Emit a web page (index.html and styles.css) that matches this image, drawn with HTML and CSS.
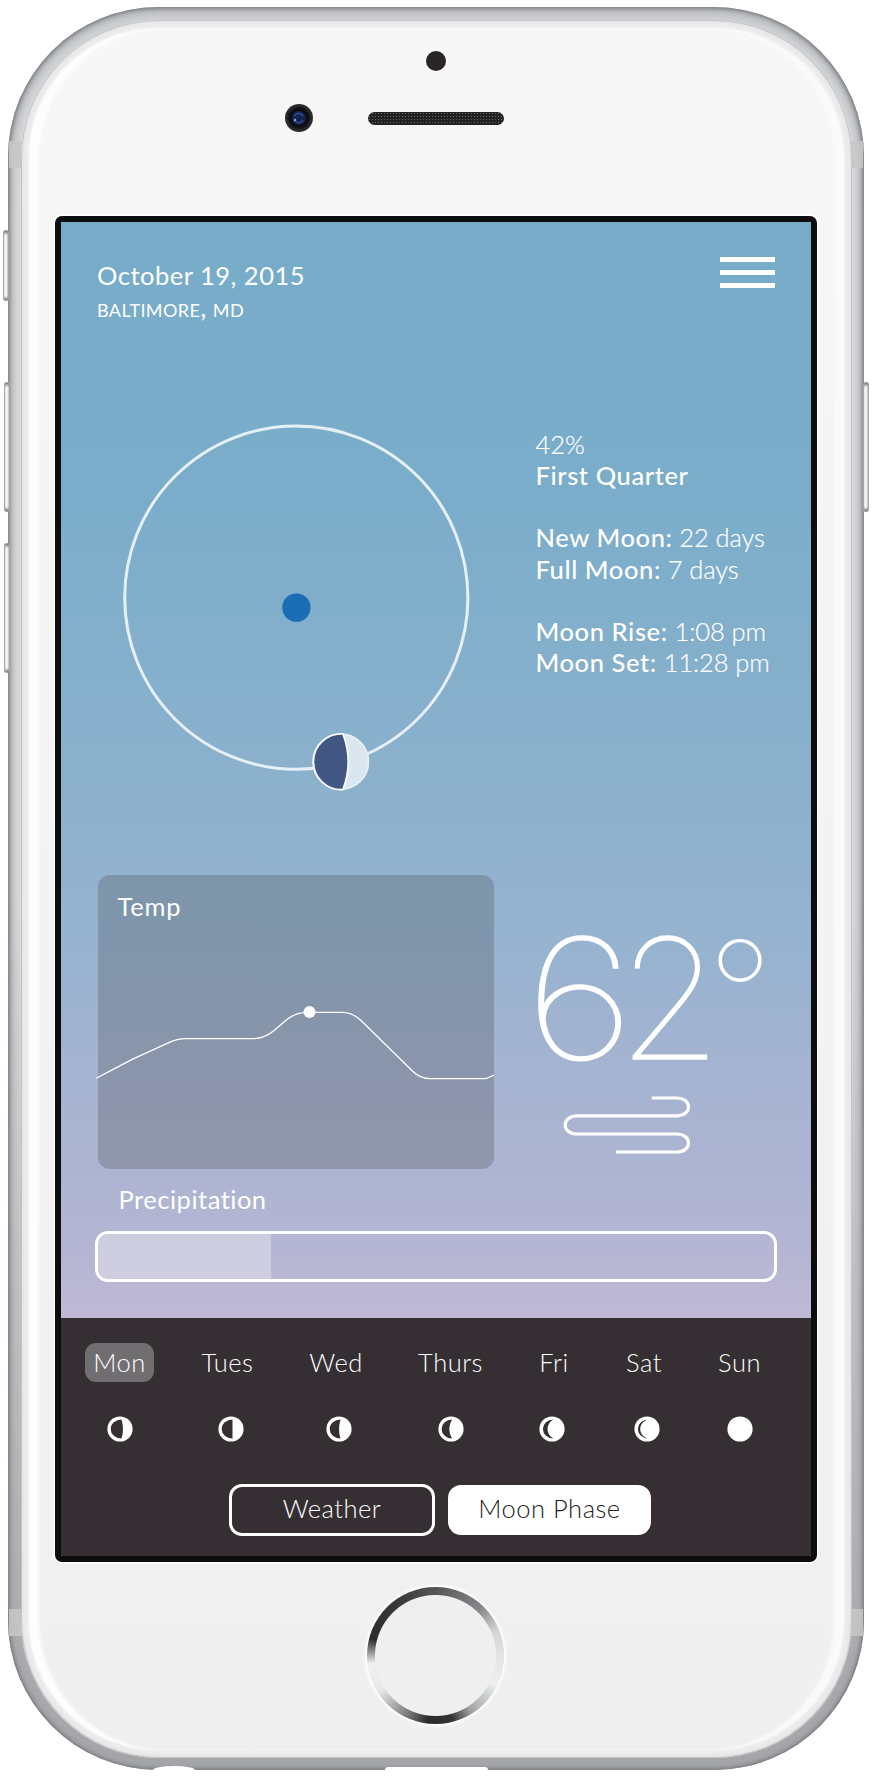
FILE: index.html
```html
<!DOCTYPE html>
<html lang="en">
<head>
<meta charset="utf-8">
<title>Moon Phase</title>
<link rel="stylesheet" href="styles.css">
</head>
<body>
<div class="phone">
  <span class="side mute"></span><span class="side vol-up"></span><span class="side vol-down"></span><span class="side power"></span>
  <span class="band tl"></span><span class="band tr"></span><span class="band bl"></span><span class="band br"></span>
  <span class="notch jack"></span><span class="notch port"></span>
  <div class="rim"><div class="glass">
    <div class="forehead">
      <span class="sensor"></span>
      <div class="ear">
        <span class="camera"><svg viewBox="0 0 28 28" width="28" height="28"><circle cx="14" cy="14" r="7" fill="#14244f"/><path d="M9 12c3-4 7-3 9 0M10 17c3 3 6 2 8-1" fill="none" stroke="#2c4b90" stroke-width="1.6"/><circle cx="10" cy="16" r="1.2" fill="#7da4e6"/></svg></span>
        <span class="speaker"></span>
      </div>
    </div>
    <div class="screen">
      <main class="sky">
        <header class="top">
          <div><div class="date">October 19, 2015</div><div class="city">BALTIMORE<span class="comma">,</span> MD</div></div>
          <div class="burger"><i></i><i></i><i></i></div>
        </header>
        <section class="moon">
          <svg class="orbit" width="360" height="372" viewBox="120 424 360 372">
            <circle cx="296.3" cy="597.6" r="171.6" fill="none" stroke="#e6eff5" stroke-width="3"/>
            <circle cx="296.4" cy="607.6" r="14.2" fill="#1b6db4"/>
            <circle cx="340.8" cy="761.7" r="27.7" fill="#dbe7f0" stroke="#e8f0f6" stroke-width="1.6"/>
            <path d="M343 733.9a27.9 27.9 0 1 0 0 55.7Q353.500 761.700 343 733.900Z" fill="#425684" stroke="#f6fafc" stroke-width="1.8"/>
          </svg>
          <div class="info">
            <p>42%</p><p><b>First Quarter</b></p>
            <p class="gap"><b>New Moon:</b> 22 days</p><p><b>Full Moon:</b> 7 days</p>
            <p class="gap"><b>Moon Rise:</b> 1:08 pm</p><p><b>Moon Set:</b> 11:28 pm</p>
          </div>
        </section>
        <section class="now">
          <div class="temp">
            <h2 class="label">Temp</h2>
            <svg class="line" width="398" height="100" viewBox="-2.500 120 398 100">
              <path d="M-2.300 203.300Q16 193.500 33.700 184.300L70.300 167.700Q79 163.700 87 163.700H153.700C163 163.700 170 160 175.300 155.700L188.700 144.300C195 139.500 201 137.300 208.700 137.300H243.700C251 137.300 257 140.500 262 145L313.700 195.700C319 201 325 203.700 332 203.700H385.300Q388 203.700 395.500 200" fill="none" stroke="#fff" stroke-width="1.300"/>
              <circle cx="211" cy="137" r="6" fill="#fff"/>
            </svg>
          </div>
          <div class="reading">
            <div class="deg"><span class="six">6</span>2<span class="ring">°</span></div>
            <svg class="wind" width="130" height="60" viewBox="562 1095 130 60"><path d="M651.700 1098H676.500C692.500 1098 692.500 1115.800 676.500 1115.800H577.500C561 1115.800 561 1134 577.500 1134H676.500C692.500 1134 692.500 1152 676.500 1152H616" fill="none" stroke="#fff" stroke-width="3.200"/></svg>
          </div>
        </section>
        <h2 class="label precip">Precipitation</h2>
        <div class="bar"><span style="width:25.600%"></span></div>
      </main>
      <footer class="dock">
        <div class="days">
          <div class="day on"><span>Mon</span><svg viewBox="0 0 26 26"><circle cx="13" cy="13" r="12.600"/><path d="M14.500 3.500A10.800 9.500 0 0 0 14.500 22.500Q17.500 13 14.500 3.500Z"/></svg></div>
          <div class="day tue"><span>Tues</span><svg viewBox="0 0 26 26"><circle cx="13" cy="13" r="12.600"/><path d="M14.500 3.500A10.800 9.500 0 0 0 14.500 22.500Z"/></svg></div>
          <div class="day wed"><span>Wed</span><svg viewBox="0 0 26 26"><circle cx="13" cy="13" r="12.600"/><path d="M14.500 3.500A10.800 9.500 0 0 0 14.500 22.500Q11.500 13 14.500 3.500Z"/></svg></div>
          <div class="day"><span>Thurs</span><svg viewBox="0 0 26 26"><circle cx="13" cy="13" r="12.600"/><path d="M14 3.500A10.400 9.500 0 0 0 14 22.500Q8.500 13 14 3.500Z"/></svg></div>
          <div class="day fri"><span>Fri</span><svg viewBox="0 0 26 26"><circle cx="13" cy="13" r="12.600"/><path d="M14.500 3.500A10.600 9.500 0 0 0 14.500 22.500C6.500 18.500 6.500 7.500 14.500 3.500Z"/></svg></div>
          <div class="day sat"><span>Sat</span><svg viewBox="0 0 26 26"><circle cx="13" cy="13" r="12.600"/><path d="M14.500 3.500A10.600 9.500 0 0 0 14.500 22.500C3.500 20 3.500 6 14.500 3.500Z"/></svg></div>
          <div class="day"><span>Sun</span><svg viewBox="0 0 26 26"><circle cx="13" cy="13" r="12.600"/></svg></div>
        </div>
        <div class="tabs"><button class="tab">Weather</button><button class="tab active">Moon Phase</button></div>
      </footer>
    </div>
    <div class="chin"><span class="home"></span></div>
  </div></div>
</div>
</body>
</html>
```
FILE: styles.css
```css
* { box-sizing: border-box; }
body { margin: 0; padding: 7px 8px; background: #fff; color: #fff; font-family: Lato, "Open Sans", sans-serif; font-size: 25.5px; font-weight: 300; font-variant-ligatures: none; letter-spacing: .5px; }
p, h2 { margin: 0; }
.phone { position: relative; width: 856px; height: 1763px; padding: 13px 12.500px; border-radius: 150px; background: linear-gradient(180deg, #d0d2d5, #dcdee0 12%, #dcdee0 50%, #a4a5a8); box-shadow: inset 0 0 4px 1px #6f7174, inset 0 0 11px 4px #a2a4a8; }
.rim { height: 1738px; padding: 7px; border-radius: 138px; background: #efefef; box-shadow: inset 0 0 0 1px #c2c3c5, inset 0 0 6px 3px #e3e3e4; }
.glass { display: flex; flex-direction: column; align-items: center; height: 1724px; border-radius: 131px; background: linear-gradient(180deg, #f7f7f7, #efefef); box-shadow: inset 0 0 2px #ddd, inset 11px 0 3px #fdfdfd, inset -11px 0 3px #fafafa; }
.side { position: absolute; width: 6px; height: 130px; border: 1px solid #a5a6a8; border-radius: 2px; background: linear-gradient(90deg, #ddd, #fff, #bbb); box-shadow: inset 0 5px 3px -3px #777, inset 0 -5px 3px -3px #777; }
.mute { left: -5px; top: 223px; height: 71px; }
.vol-up { left: -4px; top: 375px; }
.vol-down { left: -4px; top: 536px; }
.power { right: -5px; top: 375px; }
.band { position: absolute; width: 12px; height: 27px; background: rgba(200,199,199,.85); }
.tl, .bl { left: 1px; } .tr, .br { right: 1px; } .tl, .tr { top: 134px; } .bl, .br { top: 1602px; }
.notch { position: absolute; bottom: 0; background: #fff; }
.jack { left: 145px; width: 42px; height: 4px; border-radius: 50% 50% 0 0 / 100% 100% 0 0; }
.port { left: 377px; width: 103px; height: 3px; border-radius: 8px 8px 0 0; }
.forehead { height: 189px; padding-top: 23.500px; display: flex; flex-direction: column; align-items: center; }
.sensor { width: 20px; height: 20px; border-radius: 50%; background: #292425; }
.ear { display: flex; align-items: center; gap: 55px; margin: 33.500px 83px 0 0; }
.camera { width: 28px; height: 28px; border-radius: 50%; background: radial-gradient(circle, #0b0b10 45%, #272727 60%, #4b4b4b); }
.camera svg { display: block; }
.speaker { width: 136px; height: 13px; border-radius: 7px; background: radial-gradient(circle, #6a6a6a 22%, transparent 40%) 0 0 / 3px 3px #222; }
.screen { width: 762px; height: 1346px; border: 6.500px solid #0d0d0d; border-radius: 7px; box-shadow: 0 0 0 1px #fff, 0 -2px 1px #fff, 0 2px 1px #fff; display: flex; flex-direction: column; align-items: stretch; overflow: hidden; flex: none; }
.sky { height: 1096px; background: linear-gradient(180deg, #77acc9, #7badca 26%, #83afcb 38%, #8db1cd 53%, #97b3d0 67%, #a3b3d0 76%, #adb4d1 87%, #b5b6d4 94%, #bfb9d4); }
.top { display: flex; justify-content: space-between; height: 202px; padding: 36.500px 36px 0; }
.date { line-height: 32px; font-weight: 400; letter-spacing: .5px; }
.city { font-size: 25px; line-height: 32px; font-weight: 400; font-variant-caps: all-small-caps; letter-spacing: .4px; }
.comma { margin-right: 1px; font-size: 27px; line-height: 1; font-variant-caps: normal; }
.burger { display: flex; flex-direction: column; gap: 7.500px; margin-top: -2px; }
.burger i { width: 55px; height: 5.500px; background: #fff; }
.moon { display: flex; height: 451px; }
.orbit { margin-left: 58.500px; flex: none; }
.info { margin-left: 56px; padding-top: 4.500px; line-height: 31.250px; white-space: nowrap; letter-spacing: -.1px; -webkit-text-stroke: .2px #fff; }
.info b { font-weight: 500; letter-spacing: .6px; -webkit-text-stroke: 0; }
.gap { margin-top: 31.250px; }
.now { display: flex; height: 294px; padding-left: 36.500px; }
.temp { width: 396px; height: 294px; border-radius: 12px; background: rgba(64,64,64,.26); }
.label { font-size: 25.500px; font-weight: 400; line-height: 32px; }
.temp .label { padding: 15px 0 0 20px; letter-spacing: .8px; }
.line { display: block; margin: 73px 0 0 -2px; }
.reading { margin-left: 39px; }
.deg { height: 220px; padding-top: 13px; font-family: Inter, Lato, sans-serif; font-weight: 100; font-size: 167px; line-height: 220px; letter-spacing: -8px; white-space: nowrap; -webkit-text-stroke: 1.3px #fff; }
.six { display: inline-block; margin: 0 7px 0 -8px; transform: scaleX(1.16); transform-origin: 0 50%; }
.ring { position: relative; top: -14px; left: -4px; font-family: Lato, sans-serif; font-size: 148px; line-height: 1; -webkit-text-stroke-width: 1.8px; }
.wind { display: block; margin-left: 29px; }
.precip { padding: 14px 0 0 57.500px; }
.bar { width: 682px; height: 51.500px; margin: 15.500px 0 0 34px; border: 3px solid #fff; border-radius: 13px; overflow: hidden; }
.bar span { display: block; height: 100%; background: rgba(229,227,235,.5); }
.dock { flex: 1; background: #352e32; }
.days { display: grid; grid-template-columns: 109px 110px 107px 119px 86px 99px 89px; padding: 25px 0 0 4px; }
.day { display: flex; flex-direction: column; align-items: center; gap: 34px; }
.day span { line-height: 39px; height: 39px; padding: 0 8px; border-radius: 11px; }
.day.on span { background: #706e70; }
.tue span, .wed span, .sat span { margin-left: -3px; }
.fri span { margin-left: 2px; }
.tue svg, .wed svg, .sat svg { margin-left: 3px; }
.fri svg { margin-left: -2px; }
.day svg { width: 26px; height: 26px; fill: #fff; }
.day path { fill: #352e32; }
.tabs { display: flex; gap: 13px; margin: 42px 0 0 168px; align-items: center; }
.tab { width: 206px; height: 52px; padding: 0 0 4px; border: 3px solid #fff; border-radius: 13px; background: none; color: #fff; font: inherit; letter-spacing: inherit; }
.tab.active { width: 203px; height: 50px; background: #fff; color: #222; }
.chin { padding: 25px 2px 0 0; }
.home { display: block; width: 137px; height: 137px; border-radius: 50%; background: radial-gradient(circle, #efefef 60px, transparent 61px), conic-gradient(#555 0, #85878a 12%, #d5d6d8 19%, #edf0f0 32%, #a0a2a3 41%, #333 46%, #2b2c2e 52%, #77797b 57%, #e6e8e9 66%, #eef0f0 73%, #2b2c2e 79%, #37383a 90%, #555); box-shadow: 0 0 3px 2px #fff; }
```
